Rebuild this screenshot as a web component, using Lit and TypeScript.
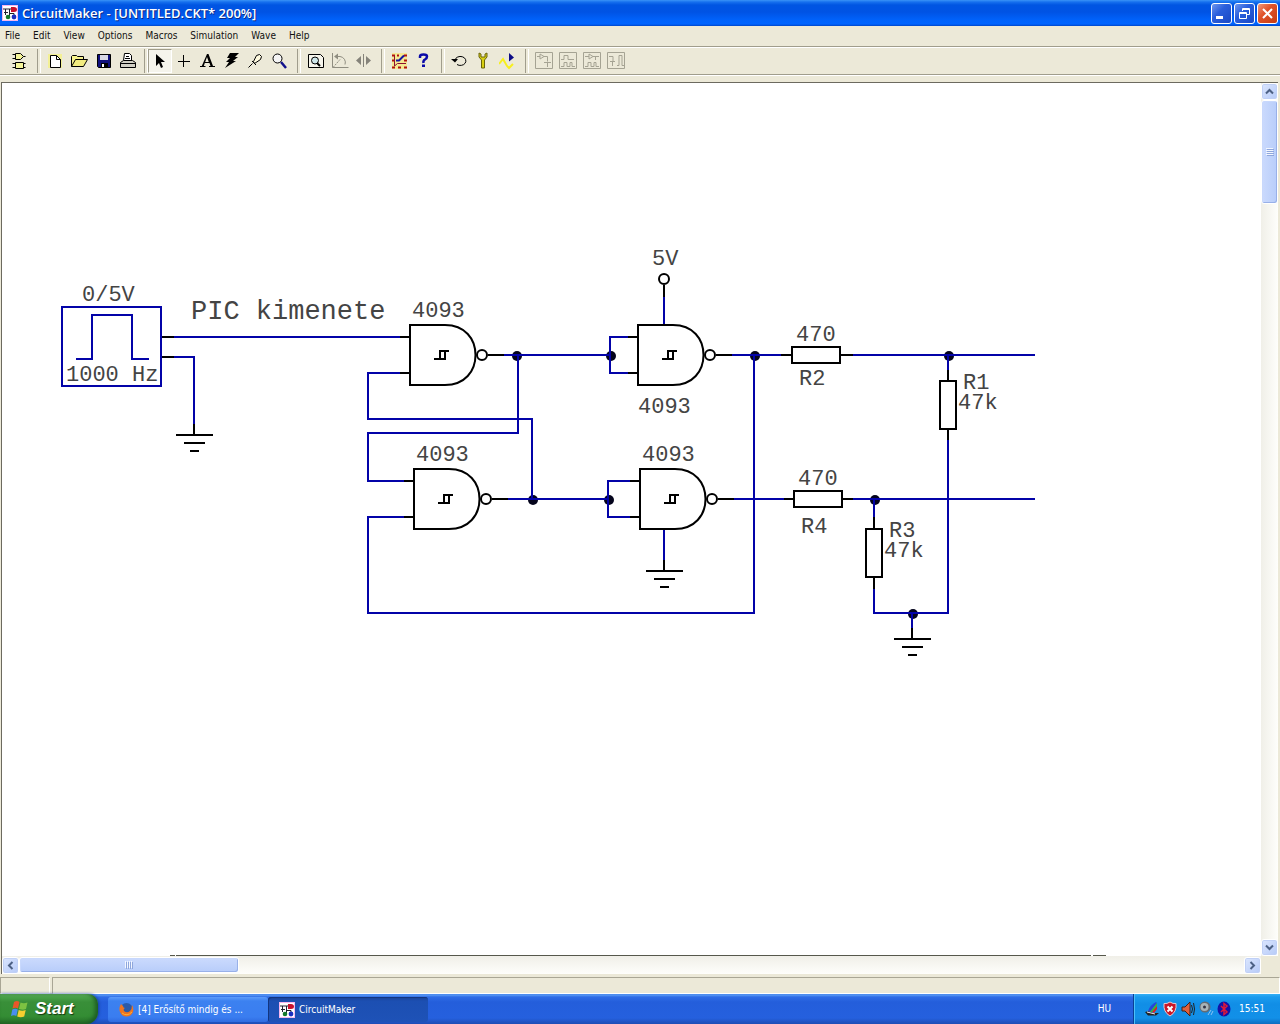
import { LitElement, html, svg, css } from "lit";
import { customElement } from "lit/decorators.js";

const MENUS = ["File", "Edit", "View", "Options", "Macros", "Simulation", "Wave", "Help"];

const appIcon = () => html`<svg class="app-icon" viewBox="0 0 16 16" width="16" height="16" aria-hidden="true">
  <rect x=".5" y=".5" width="15" height="15" fill="#fff" stroke="#f6b6ee" />
  <path d="M1 4h9M2 7.500h4M3.500 4v6M7.500 4v7" stroke="#223" fill="none" />
  <path d="M9 2h3a3 2.500 0 0 1 0 5H9z" fill="#c8102e" />
  <path d="M8 8.500h4v2" stroke="#222" fill="none" />
  <circle cx="6" cy="12" r="2.300" fill="#157a2c" />
  <circle cx="12" cy="12" r="2.400" fill="#1b2fc0" />
</svg>`;

interface Tool {
  label: string;
  art: unknown;
  pressed?: boolean;
  off?: boolean;
}

const TOOLS: (Tool | "sep" | "tight")[] = [
  { label: "Parts", art: svg`<g fill="#f4f49a" stroke="#000"><path d="M4.500 1.500h5l3 3-3 3h-5zM4.500 10.500h8v6h-8z"/><path d="M1.500 2.500h3M1.500 6.500h3M12.500 4.500h2M1.500 11.500h3M1.500 15.500h3M12.500 11.500h2M12.500 15.500h2"/></g>` },
  "sep",
  { label: "New", art: svg`<rect x="1" y="2" width="14" height="14" fill="#f8f56a" opacity=".6"/><path d="M3.500 3.500h6l4 4v8h-10z" fill="#fff" stroke="#000"/><path d="M9.500 3.500v4h4" fill="none" stroke="#000"/>` },
  { label: "Open", art: svg`<path d="M.5 14.500v-10l1-1h4l1 1h6v3" fill="#f7f38c" stroke="#000"/><path d="M.5 14.500l4-7h12l-4 7z" fill="#f2ec80" stroke="#000"/>` },
  { label: "Save", art: svg`<path d="M2.500 2.500h13v13h-12l-1-1z" fill="#10107c" stroke="#000"/><path d="M5 3h8v5H5z" fill="#d8d8e4"/><path d="M6 11h7v4H6z" fill="#000"/><path d="M7 12h2v3H7z" fill="#fff"/>` },
  { label: "Print", art: svg`<path d="M4.500 8.500l1-7h5l2 2v5" fill="#fff" stroke="#000"/><path d="M7 4.500h3M6 6.500h5" stroke="#000"/><path d="M1.500 10.500l3-2h9l3 2v5h-15z" fill="#d2d0c4" stroke="#000"/><path d="M2 11.500h14" stroke="#000"/>` },
  "tight",
  { label: "Select", pressed: true, art: svg`<path d="M5 2v12l3-3 2 5 2-1-2-5h4z" fill="#000"/>` },
  { label: "Wire", art: svg`<path d="M8.500 3v12M3 9.500h12" stroke="#000"/>` },
  { label: "Text", art: svg`<path d="M8 2h1.500l4.500 12h2v1h-6v-1h1.500l-1-3H5.800l-1 3H6.500v1H1v-1h1.800zM8 5L6.200 10h3.600z" fill="#000"/>` },
  { label: "Delete", art: svg`<path d="M7 1h9l-4 4h3l-5 4h3L2 16l4-6H3l4-4H4z" fill="#000"/>` },
  { label: "Probe", art: svg`<path d="M1.500 15.500l4-4M5 9l4 4M6.500 9.500l3-6 3-1 2 2-1 3-6 4z" fill="#fffbe0" stroke="#000"/>` },
  { label: "Zoom", art: svg`<circle cx="6.500" cy="6.500" r="4.500" fill="#f4f4f4" stroke="#000"/><path d="M10 10l5 6" stroke="#11118c" stroke-width="2.500"/>` },
  "sep",
  { label: "Fit", art: svg`<path d="M1.500 2.500h12l3 3v10h-15z" fill="#f6f5ec" stroke="#000"/><circle cx="8" cy="8.500" r="3.500" fill="#cfe7ea" stroke="#000"/><path d="M10 11l3 3" stroke="#000" stroke-width="2"/>` },
  { label: "Rotate", off: true, art: svg`<path d="M1.500 1v14.500h16" stroke="#8f8d80" fill="none"/><path d="M2 15.500l7-8" stroke="#8f8d80" fill="none" stroke-dasharray="2 1"/><path d="M6 4.500h3a6 6 0 0 1 5 8" stroke="#8f8d80" fill="none"/><path d="M3 4.500l4-3v6z" fill="#8f8d80"/>` },
  { label: "Mirror", off: true, art: svg`<path d="M6 4v9L1 8.500zM11 4v9l5-4.500z" fill="#85837a"/><path d="M8.500 2v13" stroke="#85837a"/>` },
  "sep",
  { label: "Trace", art: svg`<path d="M1 1h15v16H1z" fill="#fbe84c" opacity=".5"/><path d="M1 3.500h3M6 3.500h2M13 3.500h3M1 8.500h2M13 8.500h3M1 15.500h3M7 15.500h3M13 15.500h3" stroke="#b01010" stroke-width="2"/><path d="M3.500 4v10l3-2.500H15" stroke="#8c1030" fill="none"/><path d="M5 8.500h3l5-5" stroke="#1515a0" stroke-width="2" fill="none"/>` },
  { label: "Help", art: svg`<path d="M5 6V4.500q0-2 3.500-2t3.500 2q0 2-2 3t-1.500 3.500" stroke="#0a0aa8" stroke-width="2.500" fill="none"/><path d="M7 12.500h3V15H7z" fill="#0a0aa8"/>` },
  "sep",
  { label: "Reset", art: svg`<path d="M4 8a5.500 4.500 0 1 1 2 4.500" fill="none" stroke="#000"/><path d="M0 7h7l-3 3.500z" fill="#000"/>` },
  { label: "Step", art: svg`<path d="M4 1v4l2.500 3v8h3V8L12 5V1l-2 1v3H6V2z" fill="#d8cf12" stroke="#6a640c"/>` },
  { label: "Run", art: svg`<path d="M0 12l4-5 4 7 2 2 4-4" fill="none" stroke="#f7ef1e" stroke-width="2"/><path d="M10 1l5 4.500-5 4z" fill="#0d0d86"/>` },
  "sep",
  { label: "Display 1", off: true, art: svg`<path d="M.5.500h17v16H.5zM2 4.500h3M5 2v5l4-2.500zM9 4.500h3.500v5M9 10.500h7M12.500 11v4" fill="none" stroke="#a5a393"/>` },
  { label: "Display 2", off: true, art: svg`<path d="M.5.500h17v16H.5zM2 7.500h3v-4h4v4h6M2 14.500h3v-4h3v4h3v-4h2v4h3" fill="none" stroke="#a5a393"/>` },
  { label: "Display 3", off: true, art: svg`<path d="M.5.500h17v16H.5zM2 4.500h4M6 2v5l4-2.500zM10 4.500h6M12.500 4v4M2 14.500h3v-4h3v4h3v-4h2v4h3" fill="none" stroke="#a5a393"/>` },
  { label: "Display 4", off: true, art: svg`<path d="M.5.500h17v16H.5zM2 4.500h4v5M3 9.500h5M5.500 10v4M10 13.500h2v-10h3v10h2" fill="none" stroke="#a5a393"/>` },
];

const ground = (x: number, y: number) => svg`<path class="ink" d="M${x} ${y - 11}V${y}M${x - 18} ${y}h37M${x - 10} ${y + 8}h21M${x - 4} ${y + 16}h9" />`;

const gate = (x: number, y: number) => svg`<g class="ink">
  <path d="M${x - 10} ${y - 18}h10M${x - 10} ${y + 18}h10M${x + 78} ${y}h16" />
  <path d="M${x} ${y - 30}h35c20 0 30.500 14 30.500 30s-10.500 30-30.500 30h-35z" />
  <circle cx=${x + 72} cy=${y} r="5" />
  <path d="M${x + 24} ${y + 4}h11v-8M${x + 30} ${y + 4}v-8h9" />
</g>`;

const resistor = (x: number, y: number, w: number, h: number) => svg`<rect class="ink" x=${x} y=${y} width=${w} height=${h} />`;

const WIRES = [
  "M62 307H161V386H62zM76 359H92V315H132V359H149",
  "M174 337H400M174 357H194V425",
  "M400 373H368V419H532V499",
  "M504 355H610M518 355V433H368V481H404",
  "M404 517H368V613H754V355",
  "M508 499H608",
  "M628 337H610V373H628M630 481H608V517H630",
  "M664 297V325M664 529V562",
  "M732 355H781M734 499H784",
  "M853 355H1035M853 499H1035",
  "M948 355V370M948 440V613H874V589M874 499V517",
  "M912 613V629",
];

const NODES = [[517, 356], [611, 356], [533, 500], [609, 500], [755, 356], [949, 356], [875, 500], [913, 614]];

const LABELS: [number, number, string][] = [
  [82, 301, "0/5V"], [66, 381, "1000 Hz"], [412, 317, "4093"], [638, 413, "4093"],
  [416, 461, "4093"], [642, 461, "4093"], [652, 265, "5V"], [796, 341, "470"],
  [799, 385, "R2"], [798, 485, "470"], [801, 533, "R4"],
];

const STACKED: [number, number, string, string][] = [
  [958, 389, "R1", "47k"],
  [884, 537, "R3", "47k"],
];

@customElement("circuit-sheet")
export class CircuitSheet extends LitElement {
  static styles = css`
    :host { display: block; min-width: 0; background: #fff; overflow: hidden; }
    .sheet { display: block; width: 100%; height: 100%; }
    .wire { fill: none; stroke: #0303a8; stroke-width: 2; }
    .ink { fill: none; stroke: #000; stroke-width: 2; }
    .node { fill: #04041c; }
    .edge { stroke: #56584c; stroke-width: 1; }
    .label { font: 22px "Liberation Mono", monospace; fill: #444; }
    .note { font: 27px "Liberation Mono", monospace; fill: #444; }
  `;
  render() {
    return html`<svg class="sheet" role="img" aria-label="Circuit">
      <g transform="translate(-2 -83)">
        ${NODES.map(([x, y]) => svg`<circle class="node" cx=${x} cy=${y} r="5" />`)}
        ${WIRES.map((d) => svg`<path class="wire" d=${d} />`)}
        <path class="ink" d="M162 337h12M162 357h12M664 285v12M781 355h11M840 355h13M784 499h10M842 499h11M948 370v11M948 429v11M874 517v12M874 577v12" />
        <circle class="ink" cx="664" cy="279" r="5" />
        ${gate(410, 355)} ${gate(638, 355)} ${gate(414, 499)} ${gate(640, 499)}
        ${resistor(792, 347, 48, 16)} ${resistor(794, 491, 48, 16)}
        ${resistor(940, 381, 16, 48)} ${resistor(866, 529, 16, 48)}
        ${ground(194, 435)} ${ground(664, 571)} ${ground(912, 639)}
        ${LABELS.map(([x, y, t]) => svg`<text class="label" x=${x} y=${y}>${t}</text>`)}
        ${STACKED.map(([x, y, name, value]) => svg`<text class="label"><tspan x=${x + 5} y=${y}>${name}</tspan><tspan x=${x} y=${y + 20}>${value}</tspan></text>`)}
        <text class="note" x="191" y="319">PIC kimenete</text>
        <path class="edge" d="M170 955.500h5M176 955.500H1091M1093 955.500h13" />
      </g>
    </svg>`;
  }
}

const chevron = (d: string) => html`<svg width="9" height="9" viewBox="0 0 9 9" aria-hidden="true"><path d=${d} fill="none" stroke="#4d6185" stroke-width="2" /></svg>`;

@customElement("app-root")
export class AppRoot extends LitElement {
  static styles = css`
    * { box-sizing: border-box; }
    :host {
      display: flex; flex-direction: column; min-height: 100vh;
      background: #ece9d8; color: #111;
      font: 10px/14px "DejaVu Sans Condensed", "DejaVu Sans", sans-serif;
    }
    button { margin: 0; padding: 0; border: 0; background: none; color: inherit; font: inherit; }
    svg { display: block; flex: none; }

    .title {
      display: flex; align-items: center; gap: 4px; height: 26px; padding: 0 2px;
      background: linear-gradient(#3a93f7 0, #1670ee 2px, #0055e2 5px, #0053e4 12px, #0062fb 20px, #0064ff 24px, #0046c8 26px);
      color: #fff;
    }
    .caption { flex: 1; margin: 0; font: 600 13px/18px "Open Sans", sans-serif; text-shadow: 1px 1px #0a2a88; white-space: nowrap; }
    .controls { display: flex; gap: 2px; }
    .control {
      display: grid; place-items: center; width: 21px; height: 21px;
      border: 1px solid #fff; border-radius: 3px;
      background: linear-gradient(135deg, #6f97ee, #2a5fdc 40%, #1a48c4);
    }
    .close { background: linear-gradient(135deg, #f0997c, #e0532a 40%, #c63c12); }

    .menus { display: flex; height: 20px; align-items: center; padding: 0 5px; gap: 13px; }

    .tools {
      display: flex; align-items: center; height: 29px; padding: 0 8px;
      border-top: 1px solid #a09d8c; border-bottom: 1px solid #a09d8c;
      box-shadow: inset 0 1px #fff, 0 1px #fff;
    }
    .tool { display: grid; place-items: center; width: 24px; height: 24px; }
    .pressed { border: 1px solid #a09d8c; border-right-color: #fff; border-bottom-color: #fff; background: #f5f4ec; }
    .sep { width: 12px; height: 24px; padding-left: 5px; }
    .tight { width: 8px; height: 24px; padding-left: 4px; }
    .sep::before, .tight::before { content: ""; display: block; width: 2px; height: 100%; border-left: 1px solid #a09d8c; border-right: 1px solid #fff; }

    .work {
      flex: 1; display: grid; grid-template: 1fr 18px / 1fr 17px;
      margin: 7px 2px 3px 1px;
      border-top: 1px solid #6c6a5f; border-left: 1px solid #6c6a5f;
    }
    .vbar { display: flex; flex-direction: column; background: linear-gradient(90deg, #f0efe8, #fefefb); }
    .hbar { display: flex; background: linear-gradient(#f0efe8, #fefefb); padding: 1px 0; }
    .arrow {
      display: grid; place-items: center; width: 17px; height: 17px; flex: none;
      border: 1px solid #fff; border-radius: 3px; background: linear-gradient(135deg, #dbe6fe, #b6caf8);
      box-shadow: inset 0 0 0 1px #c0d0f6;
    }
    .thumb { display: grid; place-items: center; border: 1px solid #fff; border-radius: 3px; }
    .down { height: 104px; background: linear-gradient(90deg, #cbdafd, #b8cdfa); box-shadow: inset -1px -1px #98b0e8, inset 1px 1px #c8d8fc; }
    .across { width: 220px; background: linear-gradient(#cbdafd, #b8cdfa); box-shadow: inset -1px -1px #98b0e8, inset 1px 1px #c8d8fc; }
    .space { flex: 1; }

    .status { display: flex; gap: 2px; height: 17px; }
    .cell { border: 1px solid #a9a695; border-right-color: #fff; border-bottom-color: #fff; flex: 1; }
    .small { flex: 0 0 50px; }

    .taskbar {
      display: flex; height: 30px; color: #fff;
      background: linear-gradient(#3f80ea 0, #5a9af5 1px, #2f6ce6 3px, #245edb 8px, #2560de 24px, #1d4cb4 30px);
    }
    .start {
      display: flex; align-items: center; gap: 6px; width: 98px; padding-left: 11px; margin-right: 10px;
      border-radius: 0 10px 12px 0;
      background: linear-gradient(#5fae5f 0, #4aa34a 3px, #398f39 8px, #348d34 22px, #256f28 30px);
      box-shadow: inset -3px -1px 4px #1d5c22, 1px 0 3px #163f9c;
      font: italic bold 17px/20px "Liberation Sans", sans-serif;
      text-shadow: 1px 1px 1px #14380f;
    }
    .task {
      display: flex; align-items: center; gap: 4px; width: 160px; height: 25px; margin-top: 3px; padding-left: 11px;
      border-radius: 3px; background: linear-gradient(#5c9bfa, #3c81f0 4px, #3a7df0 20px, #2f6be0);
      white-space: nowrap;
    }
    .active { background: linear-gradient(#173f93, #1c4fb2 4px, #1e52b7); box-shadow: inset 1px 1px #12357f; }
    .lang { padding: 8px 22px 0 0; }
    .tray {
      display: flex; align-items: center; gap: 2px; width: 147px; padding-left: 10px;
      border-left: 1px solid #0a3f94;
      background: linear-gradient(#35b0f5 0, #1a9bee 3px, #118ee6 10px, #1290e8 24px, #0d6cc0 30px);
      box-shadow: inset 1px 0 #4cc0fa;
    }
    .clock { margin-left: 5px; }
  `;

  render() {
    return html`
      <header class="title">
        ${appIcon()}
        <h1 class="caption">CircuitMaker - [UNTITLED.CKT* 200%]</h1>
        <div class="controls">
          <button class="control" aria-label="Minimize"><svg width="13" height="13"><path d="M1 9h7v3H1z" fill="#fff" /></svg></button>
          <button class="control" aria-label="Restore"><svg width="13" height="13"><path d="M4.500 4V1.500h7v6H9M1.500 5.500h7v6h-7zM1 6.500h8M4 2.500h8" fill="none" stroke="#fff" /></svg></button>
          <button class="control close" aria-label="Close"><svg width="13" height="13"><path d="M2 2l9 9M11 2l-9 9" stroke="#fff" stroke-width="2" /></svg></button>
        </div>
      </header>
      <nav class="menus" aria-label="Menu">${MENUS.map((m) => html`<button>${m}</button>`)}</nav>
      <div class="tools" role="toolbar" aria-label="Tools">
        ${TOOLS.map((t) =>
          typeof t === "string"
            ? html`<span class=${t}></span>`
            : html`<button class="tool ${t.pressed ? "pressed" : ""}" aria-label=${t.label} ?disabled=${!!t.off}>
                <svg width="18" height="18" viewBox="0 0 18 18" aria-hidden="true">${t.art}</svg>
              </button>`
        )}
      </div>
      <main class="work">
        <circuit-sheet></circuit-sheet>
        <div class="vbar">
          <button class="arrow" aria-label="Scroll up">${chevron("M1 6.500L4.500 3 8 6.500")}</button>
          <div class="thumb down"><svg width="8" height="8"><path d="M0 .5h7M0 2.500h7M0 4.500h7M0 6.500h7" stroke="#f2f6ff" /><path d="M1 1.500h7M1 3.500h7M1 5.500h7M1 7.500h7" stroke="#8ea6dc" /></svg></div>
          <span class="space"></span>
          <button class="arrow" aria-label="Scroll down">${chevron("M1 2.500L4.500 6 8 2.500")}</button>
        </div>
        <div class="hbar">
          <button class="arrow" aria-label="Scroll left">${chevron("M6.500 1L3 4.500 6.500 8")}</button>
          <div class="thumb across"><svg width="8" height="8"><path d="M.5 0v7M2.500 0v7M4.500 0v7M6.500 0v7" stroke="#f2f6ff" /><path d="M1.500 1v7M3.500 1v7M5.500 1v7M7.500 1v7" stroke="#8ea6dc" /></svg></div>
          <span class="space"></span>
          <button class="arrow" aria-label="Scroll right">${chevron("M2.500 1L6 4.500 2.500 8")}</button>
        </div>
      </main>
      <div class="status"><span class="cell small"></span><span class="cell"></span></div>
      <footer class="taskbar">
        <button class="start">
          <svg width="18" height="18" viewBox="0 0 18 18" aria-hidden="true">
            <path d="M3 2q3-2 5.500 0L7 8.500Q4.500 7 1.500 8.500z" fill="#e8562a" />
            <path d="M9.500 2.500q3 1.500 7 0L15 9q-3 1.500-7 0z" fill="#7cc242" />
            <path d="M1.300 9.500q3-1.500 5.500 0L5.300 16q-2.500-1.500-5.300 0z" fill="#4a8ef0" />
            <path d="M7.700 10q3.500 1.500 7 0L13.200 16.500q-3.500 1.500-7 0z" fill="#f8cf30" />
          </svg>
          <span>Start</span>
        </button>
        <button class="task">
          <svg width="15" height="15" viewBox="0 0 15 15" aria-hidden="true">
            <circle cx="7.500" cy="7.500" r="6.500" fill="#2a5aa8" />
            <path d="M2 2Q-.5 6 1 10q2 4.500 6.500 4.500T14 10q1-4-1-7 0 4-2 6-3 2.500-6 0-1-2 1-3Q4 6 4 4q-1-1-2-2z" fill="#ee7420" />
            <path d="M3 11q5 4 10-1" stroke="#fbb03a" fill="none" />
          </svg>
          <span>[4] Erősítő mindig és ...</span>
        </button>
        <button class="task active">${appIcon()}<span>CircuitMaker</span></button>
        <span class="space"></span>
        <span class="lang">HU</span>
        <div class="tray">
          <svg width="16" height="16" viewBox="0 0 16 16"><path d="M1 11l4-1 4 2h6l-3 2.500H4z" fill="#222" /><path d="M4 10Q6 4 12 1l1 1-7 9z" fill="#2846d8" /><path d="M6 11l7-9v3l-5 6z" fill="#3b3" /><path d="M8 11l5-6v3l-3 4z" fill="#d22" /><path d="M3 11l8 2" stroke="#eee" /></svg>
          <svg width="16" height="16" viewBox="0 0 16 16"><path d="M8 1q3 2 6 1.500Q15 11 8 15 1 11 2 2.500 5 3 8 1z" fill="#cc1526" stroke="#e7c9cf" /><path d="M5.500 5.500l5 5M10.500 5.500l-5 5" stroke="#fff" stroke-width="2" /></svg>
          <svg width="16" height="16" viewBox="0 0 16 16"><path d="M2 6h3l5-5v14l-5-5H2z" fill="#e0603c" stroke="#402018" /><path d="M11.500 4q2 4 0 8M13.500 2q2 6 0 12" stroke="#222" fill="none" /></svg>
          <svg width="16" height="16" viewBox="0 0 16 16"><circle cx="7" cy="6" r="5.500" fill="#656b72" /><circle cx="6.500" cy="6" r="4" fill="#a9b4b8" /><circle cx="6.500" cy="6" r="1.500" fill="#334" /><path d="M10 14l3-5M13 14l2-4" stroke="#8cc2f2" /></svg>
          <svg width="16" height="16" viewBox="0 0 16 16"><ellipse cx="8" cy="8" rx="6.500" ry="7.500" fill="#1212a8" /><path d="M5 5l6 6-3 2.500V2.500L11 5l-6 6" fill="none" stroke="#e01838" stroke-width="1.500" /></svg>
          <time class="clock">15:51</time>
        </div>
      </footer>
    `;
  }
}
